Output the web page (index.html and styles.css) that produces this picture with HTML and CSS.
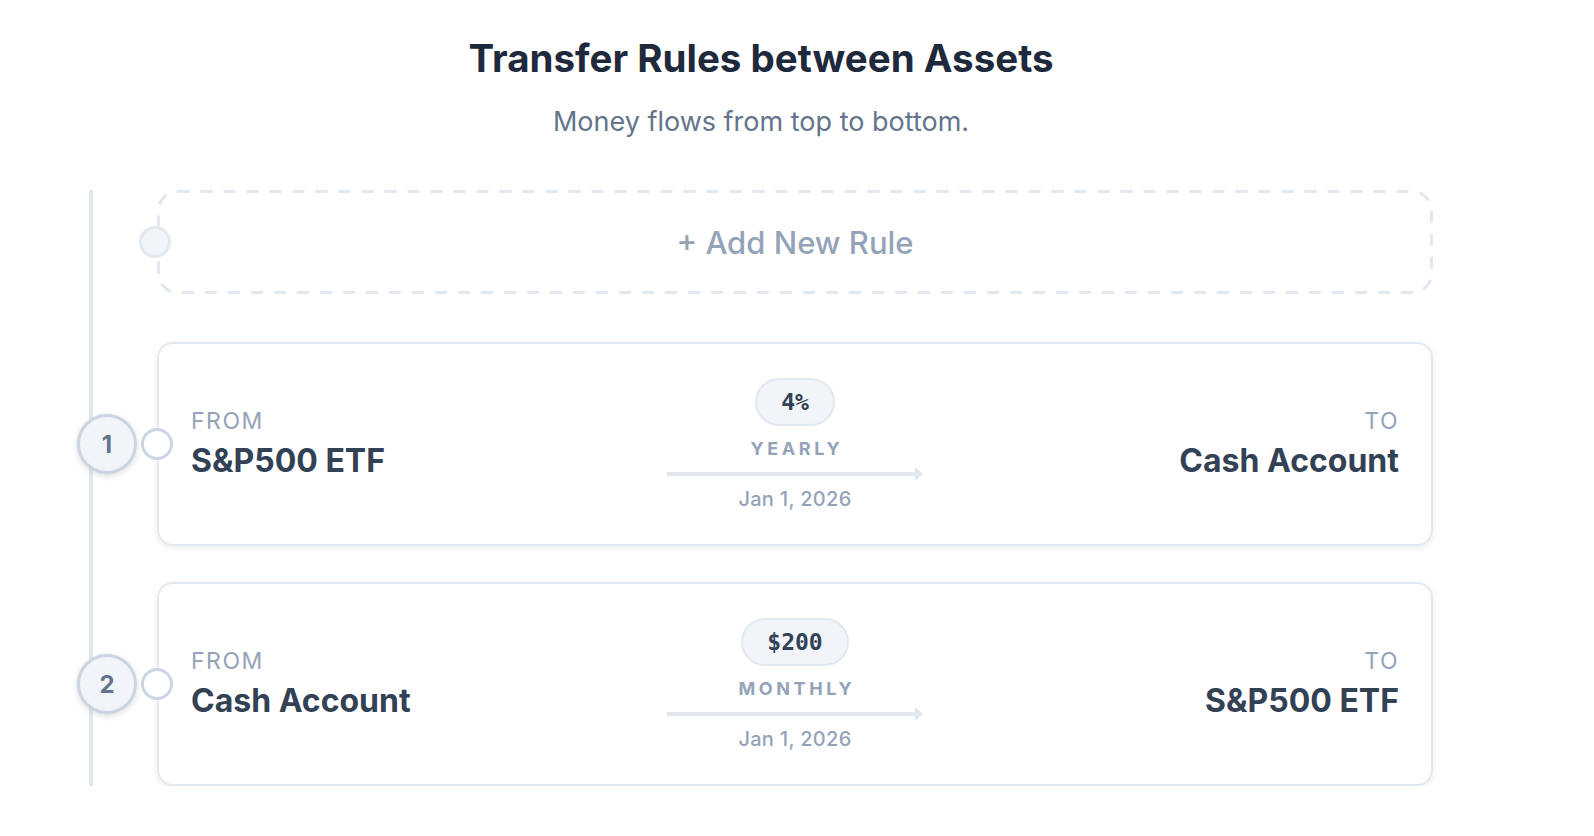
FILE: index.html
```html
<!DOCTYPE html>
<html lang="en">
<head>
    <meta charset="UTF-8">
    <meta name="viewport" content="width=device-width, initial-scale=1.0">
    <title>Transfer Rules</title>
    <link rel="stylesheet" href="styles.css">
</head>
<body>

<div class="page">
    <header class="intro">
        <h1>Transfer Rules between Assets</h1>
        <p>Money flows from top to bottom.</p>
    </header>

    <div class="timeline">
        <div class="add-rule">
            <svg class="add-frame" width="1276" height="104" viewBox="0 0 1276 104">
                <rect x="1.5" y="1.5" width="1273" height="101" rx="19" ry="19"
                      fill="none" stroke="#e2e8f0" stroke-width="3" stroke-dasharray="12 11"/>
            </svg>
            <span class="dot dot-add"></span>
            <span class="add-text">+ Add New Rule</span>
        </div>

        <div class="rule">
            <span class="step">1</span>
            <span class="dot"></span>
            <div class="side">
                <div class="label">From</div>
                <div class="asset">S&amp;P500 ETF</div>
            </div>
            <div class="flow">
                <span class="amount">4%</span>
                <span class="freq">Yearly</span>
                <span class="arrow"></span>
                <span class="date">Jan 1, 2026</span>
            </div>
            <div class="side side-to">
                <div class="label">To</div>
                <div class="asset">Cash Account</div>
            </div>
        </div>

        <div class="rule">
            <span class="step">2</span>
            <span class="dot"></span>
            <div class="side">
                <div class="label">From</div>
                <div class="asset">Cash Account</div>
            </div>
            <div class="flow">
                <span class="amount">$200</span>
                <span class="freq">Monthly</span>
                <span class="arrow"></span>
                <span class="date">Jan 1, 2026</span>
            </div>
            <div class="side side-to">
                <div class="label">To</div>
                <div class="asset">S&amp;P500 ETF</div>
            </div>
        </div>
    </div>
</div>

</body>
</html>
```

FILE: styles.css
```css
body { margin: 0; background: #fff; font-family: Inter, "Noto Sans", sans-serif; color: #334155; }
.page { width: 1344px; margin-left: 89px; padding-top: 35px; }

.intro { text-align: center; }
.intro h1 { margin: 0; font-size: 38.5px; line-height: 46px; font-weight: 700; color: #1e293b; letter-spacing: 0; }
.intro p { margin: 25px 0 0; font-size: 27px; line-height: 32px; color: #64748b; }

.timeline {
    margin-top: 52px;
    border-left: 4px solid #e2e8f0;
    padding-left: 64px;
    display: flex;
    flex-direction: column;
}

.add-rule {
    position: relative;
    height: 104px;
    display: flex;
    align-items: center;
    justify-content: center;
    margin-bottom: 48px;
}
.add-frame { position: absolute; top: 0; left: 0; }
.add-text { position: relative; font-size: 31px; font-weight: 500; color: #94a3b8; }

.rule {
    position: relative;
    height: 200px;
    border: 2px solid #e2e8f0;
    border-radius: 16px;
    box-shadow: 0 2px 6px rgba(15, 23, 42, 0.08);
    padding: 0 32px;
    display: grid;
    grid-template-columns: 1fr auto 1fr;
    align-items: center;
    margin-bottom: 36px;
}
.rule:last-child { margin-bottom: 0; }

.dot {
    position: absolute;
    top: 50%;
    left: -18px;
    width: 32px;
    height: 32px;
    margin-top: -16px;
    box-sizing: border-box;
    border: 3px solid #cbd5e1;
    border-radius: 50%;
    background: #fff;
}
.dot-add { background: #f1f5f9; border-color: #e2e8f0; }

.step {
    position: absolute;
    top: 50%;
    left: -82px;
    width: 60px;
    height: 60px;
    margin-top: -30px;
    box-sizing: border-box;
    border: 3px solid #cbd5e1;
    border-radius: 50%;
    background: #f1f5f9;
    box-shadow: 0 2px 6px rgba(15, 23, 42, 0.14);
    display: flex;
    align-items: center;
    justify-content: center;
    font-size: 24px;
    font-weight: 700;
    color: #64748b;
}

.side-to { text-align: right; }
.label { font-size: 23px; line-height: 26px; text-transform: uppercase; letter-spacing: 1.5px; color: #94a3b8; }
.asset { margin-top: 8px; font-size: 32px; line-height: 38px; font-weight: 700; color: #334155; }

.flow { display: flex; flex-direction: column; align-items: center; }
.amount {
    height: 48px;
    box-sizing: border-box;
    padding: 0 24px;
    border: 2px solid #e2e8f0;
    border-radius: 24px;
    background: #f1f5f9;
    font-family: "DejaVu Sans Mono", "Liberation Mono", monospace;
    font-weight: 700;
    font-size: 23px;
    line-height: 44px;
    color: #334155;
}
.freq { margin-top: 13px; font-size: 18px; line-height: 20px; font-weight: 700; letter-spacing: 3.6px; margin-right: -3.6px; text-transform: uppercase; color: #94a3b8; }
.arrow { position: relative; margin-top: 13px; width: 248px; height: 4px; background: #e2e8f0; margin-right: 8px; }
.arrow::after {
    content: "";
    position: absolute;
    right: -8px;
    top: -5px;
    border-left: 8px solid #e2e8f0;
    border-top: 7px solid transparent;
    border-bottom: 7px solid transparent;
}
.date { margin-top: 11px; font-size: 20px; line-height: 24px; font-weight: 500; letter-spacing: 0.3px; color: #94a3b8; }
```
